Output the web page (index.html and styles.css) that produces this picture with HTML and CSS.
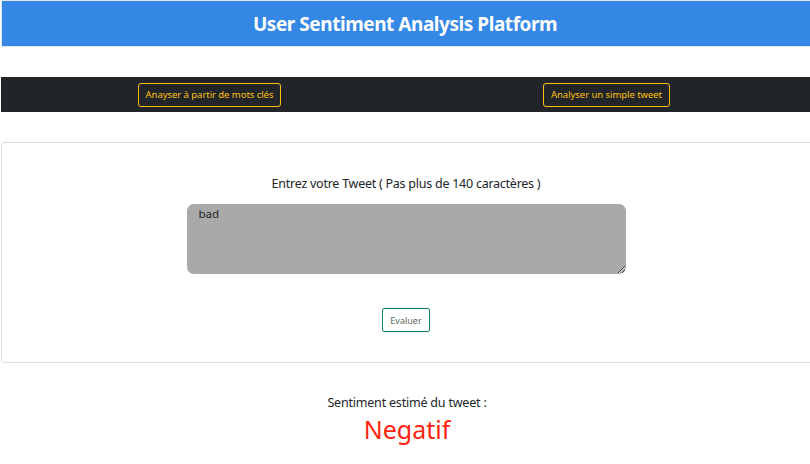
FILE: index.html
```html
<!DOCTYPE html>
<html lang="fr">
<head>
<meta charset="utf-8">
<link rel="stylesheet" href="styles.css">
</head>
<body>
<div class="page">
  <header class="top">
    <h1 class="title">User Sentiment Analysis Platform</h1>
  </header>
  <nav class="nav">
    <div class="nav-col"><button class="btn-warn">Anayser à partir de mots clés</button></div>
    <div class="nav-col"><button class="btn-warn">Analyser un simple tweet</button></div>
  </nav>
  <section class="card">
    <label class="label" for="tw">Entrez votre Tweet ( Pas plus de 140 caractères )</label>
    <textarea id="tw" class="tweet" spellcheck="false">bad</textarea>
    <button class="btn-eval">Evaluer</button>
  </section>
  <section class="result">
    <p class="result-label">Sentiment estimé du tweet :</p>
    <p class="result-value">Negatif</p>
  </section>
</div>
</body>
</html>
```
FILE: styles.css
```css
* { box-sizing: border-box; }
html, body { margin: 0; padding: 0; overflow: hidden; }
body {
  font-family: "Noto Sans", "Open Sans", sans-serif;
  color: #212529;
  background: #fff;
  width: 810px;
  height: 464px;
}
.page {
  margin-left: 1px;
  width: 812px;
}
.top {
  background: #3587e5;
  border: 1px solid #dfe6ee;
  height: 47px;
  display: flex;
  align-items: center;
  justify-content: center;
}
.title {
  margin: 0;
  color: #fff;
  font-size: 19px;
  font-weight: 700;
  letter-spacing: -0.45px;
  transform: translateX(-2px);
}
.nav {
  margin-top: 30px;
  background: #212529;
  height: 35px;
  display: flex;
  padding: 0 8px 0 10px;
}
.nav-col {
  flex: 1;
  display: flex;
  align-items: center;
  justify-content: center;
}
.btn-warn {
  background: transparent;
  border: 1px solid #ffc107;
  color: #ffc107;
  border-radius: 3px;
  font-family: inherit;
  font-size: 9.5px;
  height: 24px;
  padding: 0 7px;
  letter-spacing: -0.05px;
}
.card {
  margin-top: 30px;
  border: 1px solid #dcdcdc;
  border-radius: 3px;
  height: 221px;
  display: flex;
  flex-direction: column;
  align-items: center;
  padding-top: 33px;
}
.label {
  font-size: 12.5px;
  letter-spacing: -0.25px;
  line-height: 16px;
  transform: translateX(-1px);
}
.tweet {
  margin-top: 12px;
  width: 439px;
  height: 70px;
  background: #a9a9a9;
  border: none;
  border-radius: 7px;
  padding: 2px 12px;
  font-family: inherit;
  font-size: 11.5px;
  color: #212529;
  transform: translateX(-1px);
}
.btn-eval {
  margin-top: 34px;
  background: transparent;
  border: 1px solid #198754;
  border-radius: 2px;
  color: #5a6a62;
  font-family: inherit;
  font-size: 9px;
  width: 48px;
  height: 24px;
  padding: 0;
  transform: translateX(-1px);
}
.result {
  text-align: center;
  padding-top: 31px;
}
.result-label {
  margin: 0;
  font-size: 12.5px;
  letter-spacing: -0.2px;
  line-height: 18px;
}
.result-value {
  margin: 0;
  color: #ff230f;
  font-size: 25px;
  line-height: 34px;
}
```
